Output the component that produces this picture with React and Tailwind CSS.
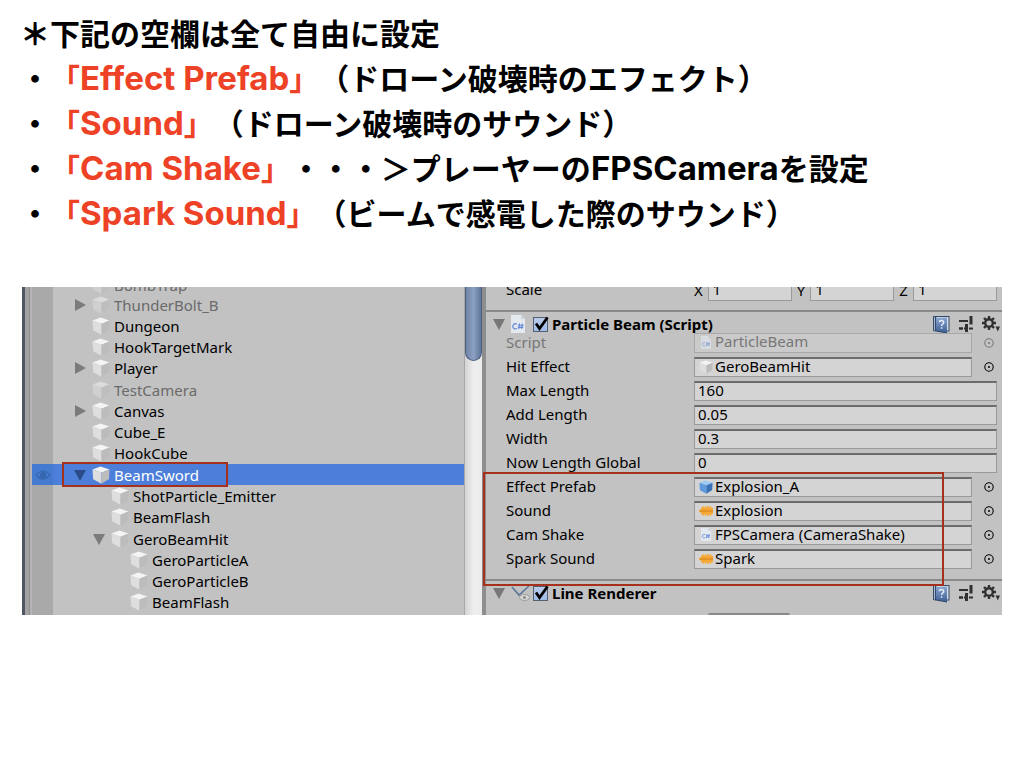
import { useState } from 'react';

const notes = [
  { name: 'Effect Prefab', text: '（ドローン破壊時のエフェクト）' },
  { name: 'Sound', text: '（ドローン破壊時のサウンド）' },
  { name: 'Cam Shake', text: '・・・＞プレーヤーの', latin: 'FPSCamera', end: 'を設定' },
  { name: 'Spark Sound', text: '（ビームで感電した際のサウンド）' },
];

const objects = [
  { name: 'ThunderBolt_B', arrow: 'right', off: true },
  { name: 'Dungeon' },
  { name: 'HookTargetMark' },
  { name: 'Player', arrow: 'right' },
  { name: 'TestCamera', off: true },
  { name: 'Canvas', arrow: 'right' },
  { name: 'Cube_E' },
  { name: 'HookCube' },
  { name: 'BeamSword', arrow: 'down', selected: true },
  { name: 'ShotParticle_Emitter', level: 1 },
  { name: 'BeamFlash', level: 1 },
  { name: 'GeroBeamHit', level: 1, arrow: 'down' },
  { name: 'GeroParticleA', level: 2 },
  { name: 'GeroParticleB', level: 2 },
  { name: 'BeamFlash', level: 2 },
];

const indents = ['pl-[21px]', 'pl-[40px]', 'pl-[59px]'];

function Cube({ blue, className }) {
  const c = blue ? ['#9ccaf2', '#5d9bdc', '#3a72b8'] : ['#f4f4f4', '#dedede', '#bcbcbc'];
  return (
    <svg viewBox="0 0 18 18" className={`shrink-0 ${className}`} aria-hidden="true">
      <path d="M8.5 0.5 17.5 3.5 9.5 6.8 0.5 3.5Z" fill={c[0]} />
      <path d="M0.5 3.5 9.5 6.8V17.8L1.2 13.2Z" fill={c[1]} />
      <path d="M17.5 3.5 9.5 6.8V17.8L17 13Z" fill={c[2]} />
    </svg>
  );
}

function Arrow({ dir, className }) {
  return (
    <svg viewBox="0 0 12 12" className={className} fill="currentColor" aria-hidden="true">
      {dir === 'down' ? <path d="M0 1H12L6 12Z" /> : <path d="M1 0 12 6 1 12Z" />}
    </svg>
  );
}

function ScriptIcon({ className }) {
  return (
    <svg viewBox="0 0 14 18" className={`shrink-0 ${className}`} aria-hidden="true">
      <path d="M0 0H10L14 4V18H0Z" fill="#e4e9f0" />
      <path d="M10 0V4H14Z" fill="#cfd3da" />
      <path d="M6 9.2A2.6 2.6 0 1 0 6 13.4M8.6 8.5 7.8 14M11.4 8.5 10.6 14M7 10.2H12.6M6.8 12.4H12.2" fill="none" stroke="#5f87d6" strokeWidth="1.1" />
    </svg>
  );
}

function SoundIcon({ className }) {
  return (
    <svg viewBox="0 0 14 12" className={`shrink-0 ${className}`} aria-hidden="true">
      <path d="M0 5 2 4.5V2.5H3.5V1.5H5V2.5H6V1H7.5V2.5H8.5V1H10V2.5H11V1.5H12.5V3H14V9H12.5V10.5H11V9.5H10V11H8.5V9.5H7.5V11H6V9.5H5V10.5H3.5V9.5H2V7.5L0 7Z" fill="#f5a836" />
      <path d="M1 6H14" stroke="#cf801f" strokeWidth="1" />
    </svg>
  );
}

function LineIcon({ className }) {
  return (
    <svg viewBox="0 0 20 18" className={className} aria-hidden="true">
      <path d="M1 3 8 11 18 2" fill="none" stroke="#5b7898" strokeWidth="1.6" />
      <ellipse cx="13.5" cy="13.5" rx="5" ry="3" fill="#d8d8d8" stroke="#9a9a9a" />
      <circle cx="13.5" cy="13.5" r="1.6" fill="#8d8d8d" />
    </svg>
  );
}

function BookIcon() {
  return (
    <svg viewBox="0 0 18 19" className="h-[19px] w-[18px]" aria-hidden="true">
      <defs>
        <linearGradient id="book" x1="0" y1="0" x2="0" y2="1">
          <stop offset="0" stopColor="#8ba7d0" />
          <stop offset="1" stopColor="#3e5f96" />
        </linearGradient>
      </defs>
      <path d="M1 1H17.5V16.5H15V18.5L1 16Z" fill="#344867" />
      <path d="M4 2H16.5V15.5H15" fill="#d3dbe8" />
      <path d="M4 3 15 2.5V17.5L4 15.5Z" fill="url(#book)" />
      <path d="M2.5 2V15.5" stroke="#a9bbd6" />
      <path d="M7.3 7.2C7.5 5 11.8 5 11.7 7.5 11.6 9 9.6 9 9.6 11M9.6 12.3V13.8" fill="none" stroke="#e8eef8" strokeWidth="1.5" />
    </svg>
  );
}

function PresetIcon() {
  return (
    <svg viewBox="0 0 14 16" className="h-4 w-[14px]" fill="none" stroke="#303030" aria-hidden="true">
      <path d="M0 5H9M0 12.5H4M10 12.5H14" strokeWidth="2" />
      <path d="M12 0V8.5M7.5 8V16" strokeWidth="3" />
      <path d="M0 12.5H9" strokeWidth="2" strokeDasharray="4 1" />
    </svg>
  );
}

function GearIcon() {
  return (
    <svg viewBox="0 0 18 16" className="h-4 w-[18px]" aria-hidden="true">
      <circle cx="7" cy="7" r="3.8" fill="none" stroke="#303030" strokeWidth="2.4" />
      <path d="M7 0V3M7 11V14M0 7H3M11 7H14M2 2 4.2 4.2M9.8 9.8 12 12M12 2 9.8 4.2M4.2 9.8 2 12" stroke="#303030" strokeWidth="2.4" />
      <path d="M13.5 10.5H18L15.8 15.5Z" fill="#303030" />
    </svg>
  );
}

function Hierarchy() {
  return (
    <div className="flex min-w-0">
      <div className="w-[3px] bg-[#505762]" />
      <div className="w-[5px] border-r border-[#8f8f8f] bg-[#a3a3a3]" />
      <div className="w-[2px] bg-[#b5b5b5]" />
      <ul className="flex min-w-0 flex-1 flex-col">
        <li className="flex h-[7px] items-end overflow-hidden">
          <span className="h-full w-[21px] bg-[#a9a9a9]" />
          <span className="flex flex-1 items-center gap-1 pl-[39px] leading-4 text-[#6a6a6a]">
            <Cube className="h-[18px] w-[18px] opacity-50" />
            BombTrap
          </span>
        </li>
        {objects.map((o, i) => (
          <li key={i} className={`relative flex min-h-[21px] flex-1 ${o.selected ? 'bg-[#4d7fda] text-white' : o.off ? 'text-[#6a6a6a]' : ''}`}>
            <span className={`flex w-[21px] items-center justify-center ${o.selected ? 'bg-[#447bd0]' : 'bg-[#a9a9a9]'}`}>
              {o.selected && (
                <svg viewBox="0 0 16 12" className="h-3 w-4" fill="none" stroke="#3766ae" strokeWidth="1.2" aria-hidden="true">
                  <path d="M1 6Q8-2 15 6Q8 14 1 6Z" />
                  <circle cx="8" cy="6" r="2.6" fill="#3766ae" />
                </svg>
              )}
            </span>
            <span className={`flex items-center gap-1 ${indents[o.level || 0]}`}>
              <span className="flex w-[14px] items-center">
                {o.arrow && <Arrow dir={o.arrow} className={`h-3 w-3 ${o.selected ? 'text-[#2b4c88]' : 'text-[#7b7b7b]'}`} />}
              </span>
              <Cube className={`h-[18px] w-[18px] ${o.off ? 'opacity-50' : ''}`} />
              {o.name}
            </span>
            {o.selected && <span className="absolute -top-[2px] -bottom-[2px] left-[30px] w-[166px] border-2 border-[#a5301c]" />}
          </li>
        ))}
        <li className="h-[2px] w-[21px] bg-[#a9a9a9]" />
      </ul>
      <div className="w-[18px] border-l border-[#a8a8a8] bg-linear-to-r from-[#d4d4d4] via-[#eeeeee] to-[#ececec]">
        <div className="h-[74px] rounded-b-full border border-t-0 border-[#4c5f80] bg-linear-to-r from-[#7185a6] via-[#8ba0c2] to-[#62779c]" />
      </div>
    </div>
  );
}

function Header({ title, icon }) {
  const [on, setOn] = useState(true);
  return (
    <div className="flex h-[22px] items-center pr-[2px] pl-[7px]">
      <Arrow dir="down" className="mr-[6px] h-3 w-3 text-[#777777]" />
      <span className="mr-[2px] flex w-5">{icon}</span>
      <label className="flex items-center gap-1 font-bold">
        <span className="relative flex">
          <input
            type="checkbox"
            checked={on}
            onChange={(e) => setOn(e.target.checked)}
            className="h-[15px] w-[15px] appearance-none border border-[#56606f] bg-linear-to-b from-[#b9cbe9] to-[#9fbce8]"
          />
          {on && (
            <svg viewBox="0 0 16 16" className="pointer-events-none absolute -top-px left-0 h-4 w-4" aria-hidden="true">
              <path d="M3 7.5 6.5 12.5 14.5 1.5" fill="none" stroke="#000" strokeWidth="2.8" />
            </svg>
          )}
        </span>
        {title}
      </label>
      <div className="ml-auto flex items-center gap-[9px]">
        <button aria-label="Help"><BookIcon /></button>
        <button aria-label="Presets"><PresetIcon /></button>
        <button aria-label="Settings"><GearIcon /></button>
      </div>
    </div>
  );
}

function NumberRow({ label, value }) {
  return (
    <label className="flex h-5 items-center pr-[5px] pl-[20px]">
      <span className="w-[188px] pb-[2px]">{label}</span>
      <input
        defaultValue={value}
        className="h-5 min-w-0 flex-1 border border-t-2 border-[#9a9a9a] border-t-[#6c6c6c] bg-[#d4d4d4] px-[3px] pb-1 leading-4 outline-none"
      />
    </label>
  );
}

function ObjectRow({ label, value, icon, off }) {
  return (
    <div className={`flex h-5 items-center pr-[6px] pl-[20px] ${off ? 'text-[#777777]' : ''}`}>
      <span className="w-[188px] pb-[2px]">{label}</span>
      <button
        className={`flex h-5 min-w-0 flex-1 items-center gap-[2px] border pb-[2px] pl-1 leading-4 ${off ? 'border-[#a8a8a8] bg-[#cacaca]' : 'border-t-2 border-[#9a9a9a] border-t-[#6c6c6c] bg-[#d4d4d4]'}`}
      >
        {icon}
        <span className="pb-[2px]">{value}</span>
      </button>
      <button aria-label={`Select ${label}`} className="ml-[9px] flex w-[15px] justify-center">
        <svg viewBox="0 0 10 10" className="h-[10px] w-[10px]" aria-hidden="true">
          <circle cx="5" cy="5" r="4.2" fill="none" stroke="currentColor" strokeWidth="1.1" />
          <circle cx="5" cy="5" r="1" fill="currentColor" />
        </svg>
      </button>
    </div>
  );
}

function Inspector() {
  return (
    <div className="flex min-w-0 flex-col border-l-4 border-[#8e8e8e]">
      <div className="flex h-[14px] items-end overflow-hidden pr-[5px] pl-[20px]">
        <span className="w-[188px] pb-[2px] leading-5">Scale</span>
        <div className="flex flex-1 gap-[5px]">
          {['X', 'Y', 'Z'].map((axis) => (
            <label key={axis} className="flex h-5 min-w-0 flex-1 items-center">
              <span className="w-4 pb-[2px] leading-5">{axis}</span>
              <input defaultValue="1" className="h-5 w-full min-w-0 border border-[#9a9a9a] bg-[#d4d4d4] px-1 pb-1 leading-4 outline-none" />
            </label>
          ))}
        </div>
      </div>
      <div className="mt-[9px] border-t-2 border-[#8a8a8a] pt-px">
        <Header title="Particle Beam (Script)" icon={<ScriptIcon className="h-[18px] w-[14px]" />} />
      </div>
      <div className="-mt-[2px] flex flex-col gap-1">
        <ObjectRow label="Script" value="ParticleBeam" off icon={<ScriptIcon className="h-[13px] w-[14px] opacity-60" />} />
        <ObjectRow label="Hit Effect" value="GeroBeamHit" icon={<Cube className="h-[14px] w-[14px]" />} />
        <NumberRow label="Max Length" value="160" />
        <NumberRow label="Add Length" value="0.05" />
        <NumberRow label="Width" value="0.3" />
        <NumberRow label="Now Length Global" value="0" />
        <div className="relative flex flex-col gap-1">
          <ObjectRow label="Effect Prefab" value="Explosion_A" icon={<Cube blue className="h-[14px] w-[14px]" />} />
          <ObjectRow label="Sound" value="Explosion" icon={<SoundIcon className="h-3 w-[14px]" />} />
          <ObjectRow label="Cam Shake" value="FPSCamera (CameraShake)" icon={<ScriptIcon className="h-[13px] w-[14px]" />} />
          <ObjectRow label="Spark Sound" value="Spark" icon={<SoundIcon className="h-3 w-[14px]" />} />
          <div className="pointer-events-none absolute -top-[5px] right-[58px] -bottom-[17px] -left-[3px] border-2 border-[#a5301c]" />
        </div>
      </div>
      <div className="mt-[10px] border-t-2 border-[#8a8a8a] pt-px">
        <Header title="Line Renderer" icon={<LineIcon className="h-[18px] w-5" />} />
      </div>
      <div className="mt-[9px] ml-[222px] h-[2px] w-[82px] rounded-t bg-[#8a8a8a]" />
    </div>
  );
}

function Latin({ children }) {
  return <span className="font-['Inter',sans-serif] text-[33px] leading-none font-bold">{children}</span>;
}

export default function App() {
  return (
    <main className="bg-white pt-[10px] text-black">
      <div className="px-5 font-['Noto_Sans_CJK_JP',sans-serif] text-[30px] leading-[45px] font-bold [text-spacing-trim:space-all]">
        <p className="h-[45px]"><span className="font-black">＊</span>下記の空欄は全て自由に設定</p>
        <ul>
          {notes.map((n) => (
            <li key={n.name} className="h-[45px]">
              ・<span className="text-[#ee4227]">「<Latin>{n.name}</Latin>」</span>
              {n.text}
              {n.latin && <Latin>{n.latin}</Latin>}
              {n.end}
            </li>
          ))}
        </ul>
      </div>
      <section className="mx-[22px] mt-[52px] grid grid-cols-[460fr_520fr] overflow-hidden bg-[#c2c2c2] font-['Noto_Sans',sans-serif] text-[15px] leading-5">
        <Hierarchy />
        <Inspector />
      </section>
    </main>
  );
}
